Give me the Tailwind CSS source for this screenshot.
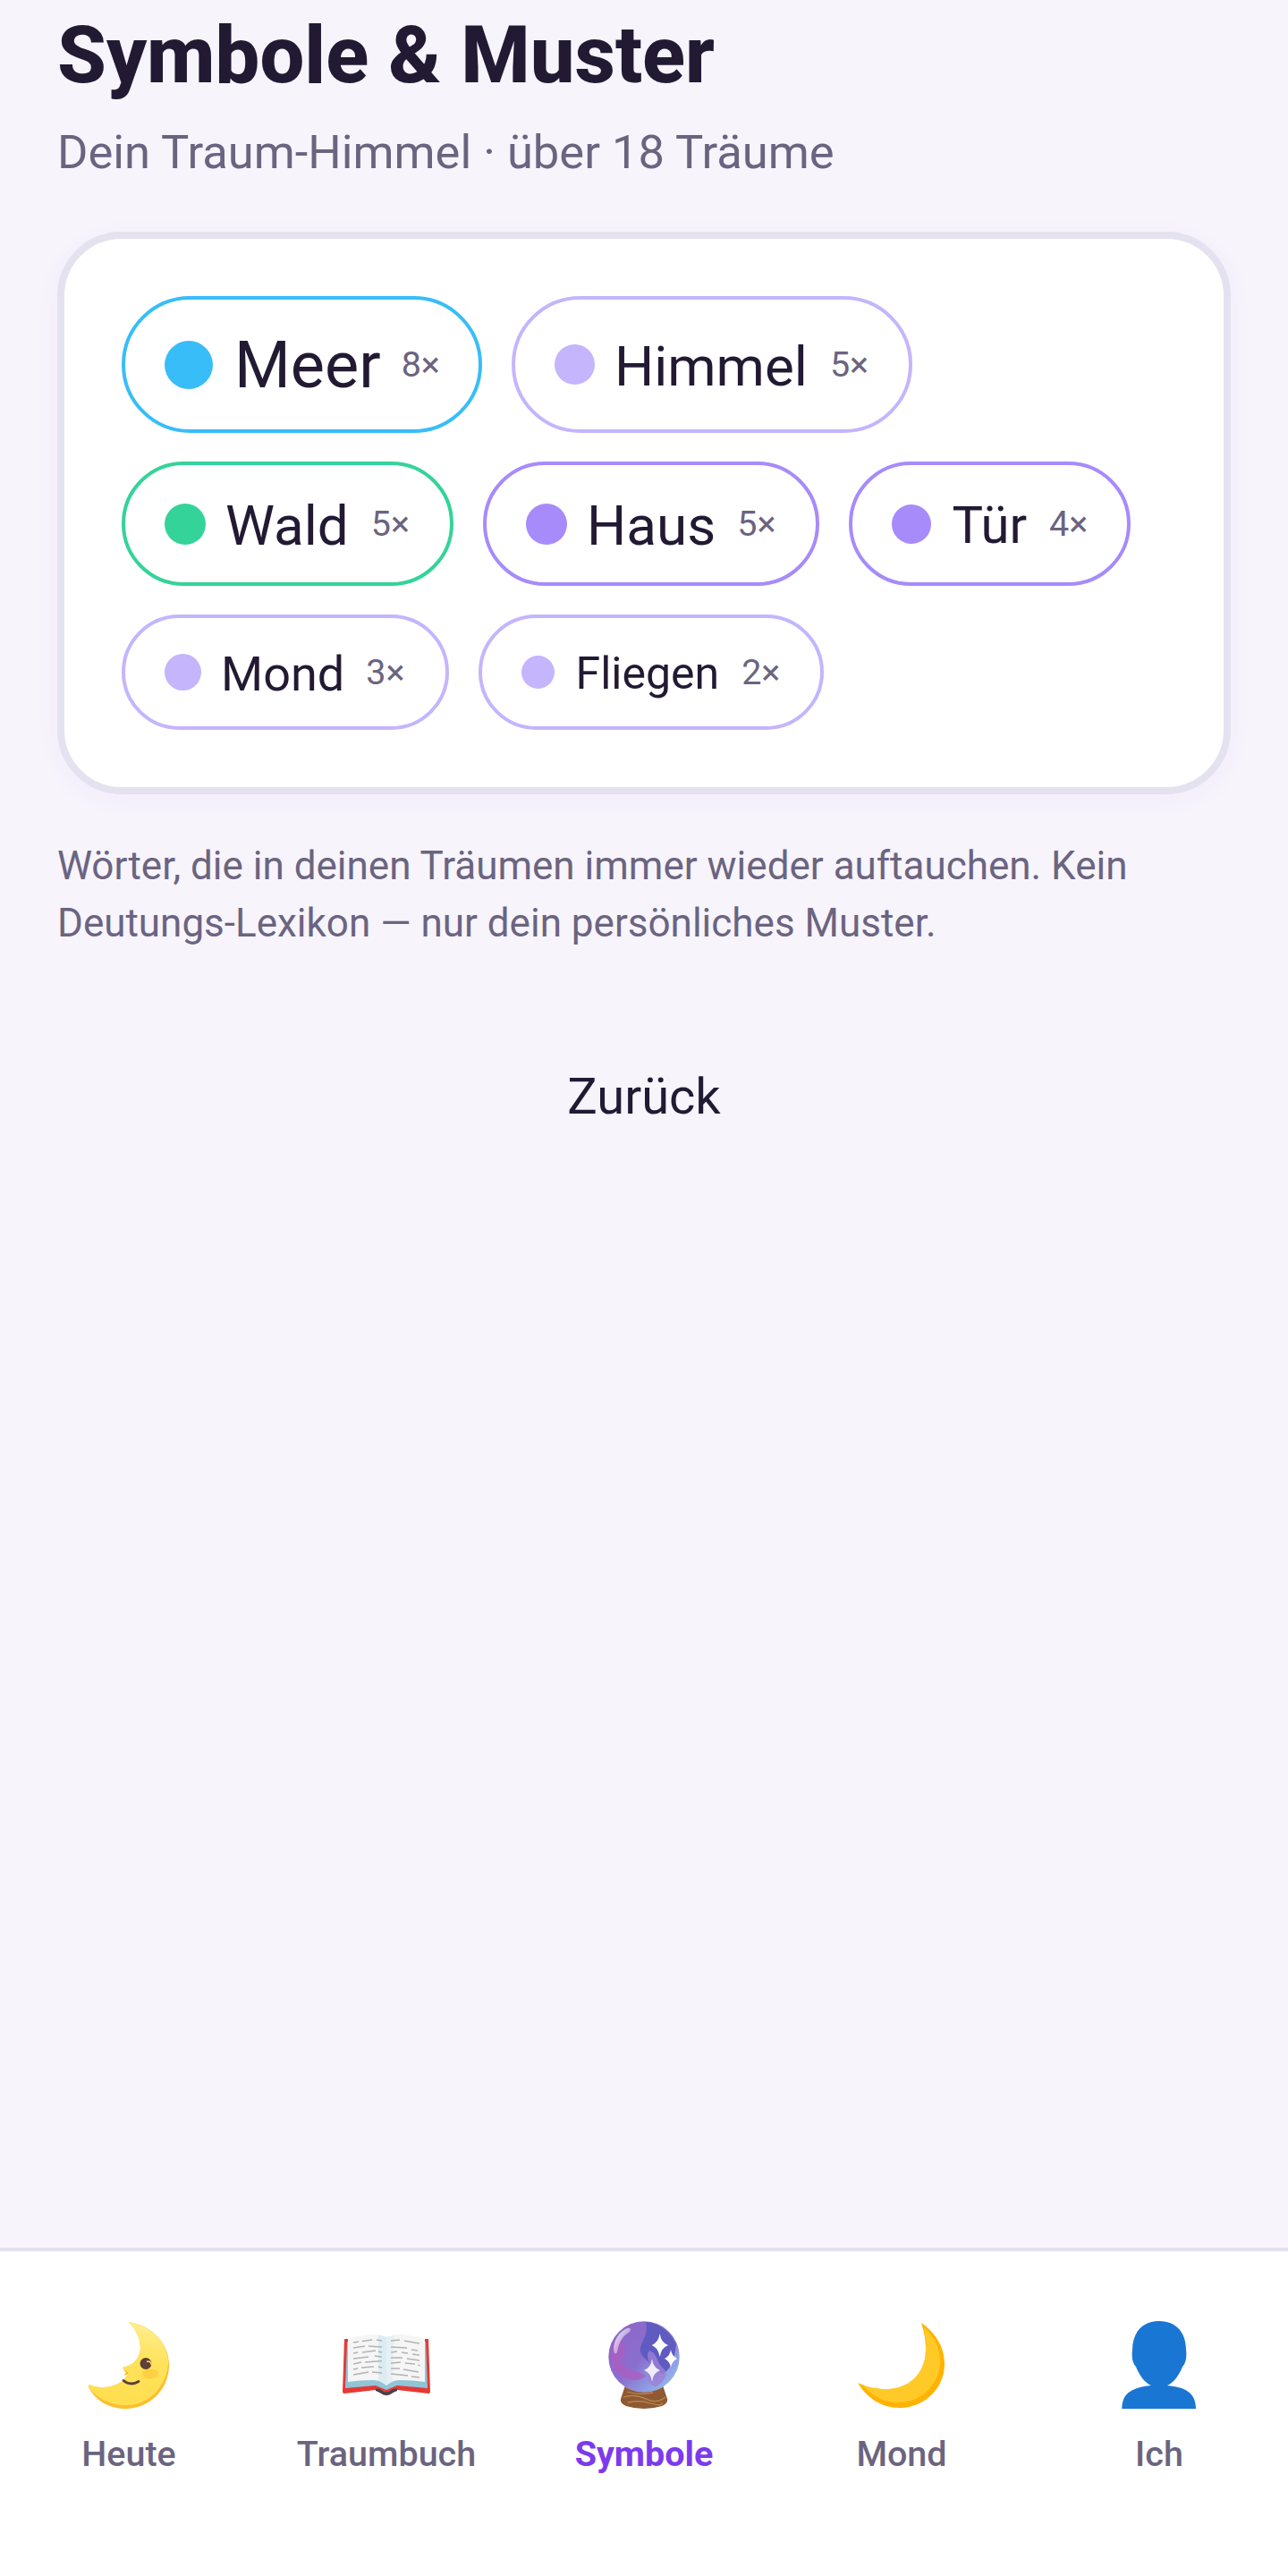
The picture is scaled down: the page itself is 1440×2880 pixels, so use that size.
<!DOCTYPE html>
<html lang="de">
<head>
  <meta charset="UTF-8" />
  <meta name="viewport" content="width=device-width, initial-scale=1.0"/>
  <title>Symbole & Muster</title>
  <script src="https://cdn.jsdelivr.net/npm/@tailwindcss/browser@4"></script>
</head>
<body class="bg-[#f7f4fc] text-[#221a33] font-[Roboto,sans-serif]">
  <div class="flex flex-col h-[2880px]">

    <main class="flex-1 px-[64px]">
      <h1 class="pt-[14px] text-[88.5px] leading-[96px] font-extrabold">Symbole &amp; Muster</h1>
      <p class="mt-[28px] text-[52.5px] leading-[64px] text-[#6b6480]">Dein Traum-Himmel · über 18 Träume</p>

      <!-- Symbol cloud -->
      <section class="mt-[57px] h-[629px] bg-white border-[8px] border-[#e5e2f0] rounded-[72px] p-[64px] shadow-[0_6px_30px_rgba(124,58,237,0.04)]">
        <div class="flex flex-wrap gap-x-[33px] gap-y-[32px]">
          <div class="flex items-center h-[153px] pl-[44px] pr-[43px] border-[4px] border-[#38bdf8] rounded-full">
            <span class="w-[54px] h-[54px] rounded-full bg-[#38bdf8]"></span>
            <span class="ml-[24px] pt-[3px] text-[72px]">Meer</span>
            <span class="ml-[23px] text-[39.5px] text-[#6b6480]">8×</span>
          </div>
          <div class="flex items-center h-[153px] pl-[44px] pr-[45px] border-[4px] border-[#c4b5fd] rounded-full">
            <span class="w-[45px] h-[45px] rounded-full bg-[#c4b5fd]"></span>
            <span class="ml-[22px] pt-[4px] text-[62px]">Himmel</span>
            <span class="ml-[25px] text-[39.5px] text-[#6b6480]">5×</span>
          </div>
          <div class="flex items-center h-[139px] pl-[44px] pr-[45px] border-[4px] border-[#34d399] rounded-full">
            <span class="w-[46px] h-[46px] rounded-full bg-[#34d399]"></span>
            <span class="ml-[22px] pt-[3px] text-[62px]">Wald</span>
            <span class="ml-[25px] text-[39.5px] text-[#6b6480]">5×</span>
          </div>
          <div class="flex items-center h-[139px] pl-[44px] pr-[45px] border-[4px] border-[#a78bfa] rounded-full">
            <span class="w-[46px] h-[46px] rounded-full bg-[#a78bfa]"></span>
            <span class="ml-[22px] pt-[3px] text-[62px]">Haus</span>
            <span class="ml-[24px] text-[39.5px] text-[#6b6480]">5×</span>
          </div>
          <div class="flex items-center h-[139px] pl-[44px] pr-[44px] border-[4px] border-[#a78bfa] rounded-full">
            <span class="w-[44px] h-[44px] rounded-full bg-[#a78bfa]"></span>
            <span class="ml-[23px] pt-[3px] text-[58px]">Tür</span>
            <span class="ml-[25px] text-[39.5px] text-[#6b6480]">4×</span>
          </div>
          <div class="flex items-center h-[129px] pl-[44px] pr-[45px] border-[4px] border-[#c4b5fd] rounded-full">
            <span class="w-[41px] h-[41px] rounded-full bg-[#c4b5fd]"></span>
            <span class="ml-[22px] pt-[3px] text-[54px]">Mond</span>
            <span class="ml-[24px] text-[39.5px] text-[#6b6480]">3×</span>
          </div>
          <div class="flex items-center h-[129px] pl-[44px] pr-[45px] border-[4px] border-[#c4b5fd] rounded-full">
            <span class="w-[37px] h-[37px] rounded-full bg-[#c4b5fd]"></span>
            <span class="ml-[24px] pt-[3px] text-[50px]">Fliegen</span>
            <span class="ml-[25px] text-[39.5px] text-[#6b6480]">2×</span>
          </div>
        </div>
      </section>

      <p class="mt-[48px] text-[44px] leading-[64px] text-[#6b6480]">Wörter, die in deinen Träumen immer wieder auftauchen. Kein<br>Deutungs-Lexikon — nur dein persönliches Muster.</p>

      <button class="block w-full mt-[120px] h-[80px] text-[56px] text-center">Zurück</button>
    </main>

    <!-- Bottom navigation -->
    <nav class="h-[367px] grid grid-cols-5 bg-white border-t-[4px] border-[#e5e2f0] pt-[77px]">
      <a class="flex flex-col items-center">
        <svg class="w-[100px] h-[100px]" viewBox="0 0 100 100">
          <defs>
            <linearGradient id="faceMoon" x1="0.7" y1="0" x2="0.5" y2="1">
              <stop offset="0" stop-color="#ffee90"/>
              <stop offset="0.45" stop-color="#ffe25a"/>
              <stop offset="1" stop-color="#ffde50"/>
            </linearGradient>
          </defs>
          <path fill="#fbc02d" d="M50 2C76 6 95 26 95 50C95 78 73 99 46 99C28 99 13 90 5 75C4 73 6 72 8 73C20 77 32 75 42 69L50 60L43 53C54 51 62 44 63 32C63 20 58 11 50 2Z"/>
          <path fill="url(#faceMoon)" d="M50 2C75 6 95 26 94 49C92 74 72 96 46 95C30 95 15 88 5 75C4 73 6 72 8 73C20 77 32 75 42 69L50 60L43 53C54 51 62 44 63 32C63 20 58 11 50 2Z"/>
          <path fill="#ffb300" d="M43 53L50 60L44 62L47 59Z"/>
          <ellipse cx="74" cy="60" rx="9" ry="5.5" fill="#fdc93a" opacity="0.7"/>
          <circle cx="69" cy="48.5" r="6.5" fill="#5d4037"/>
          <path d="M70 46.5Q74 44.5 75.5 50" stroke="#ffe25a" stroke-width="1.6" fill="none"/>
          <path d="M44 67.5Q52 74 61 68.5" stroke="#5d4037" stroke-width="2.8" fill="none" stroke-linecap="round"/>
        </svg>
        <span class="mt-[26px] text-[39.5px] leading-[48px] font-medium text-[#6b6480]">Heute</span>
      </a>
      <a class="flex flex-col items-center">
        <svg class="w-[100px] h-[100px]" viewBox="0 0 100 100">
          <path fill="#e53935" d="M3 21L1 80Q1 82 3 82L38 78L44 82Q50 86 56 82L62 78L97 82Q99 82 99 80L97 21Z"/>
          <path fill="#90c4d6" d="M6 24L4 76L38 73L50 78L62 73L96 76L94 24Z"/>
          <path fill="#37474f" d="M38 76.5L43 77Q50 84 57 77L62 76.5L62 79L57 81Q50 87 43 81L38 79Z"/>
          <path fill="#f5f5f5" d="M7 21Q24 16 41 16L50 19L50 73Q42 66 34 67Q20 67 7 69Z"/>
          <path fill="#f5f5f5" d="M93 21Q76 16 59 16L50 19L50 73Q58 66 66 67Q80 67 93 69Z"/>
          <path fill="#dcecf2" d="M41 16L50 19L50 73Q46 69 41 67.500Z"/>
          <path fill="#e6f0f4" d="M59 17L50 19L50 73Q53 70 57 68Z"/>
          <g stroke="#b3b3b3" stroke-width="1.3" fill="none">
            <path d="M13 25L19 24M23 23.500L34 22M39 22L45 23M13 31L26 29M30 29L45 30M13 37L18 36M23 36L38 34M41 35L45 36M13 43L30 41M37 40L45 41M13 49L22 47M26 47L45 45.500M13 55L18 54M22 53L36 52M41 52L45 53M13 61L30 58M34 58L45 59"/>
            <path d="M55 23L65 22M70 23L87 26M55 30L73 31M78 33L85 34M55 36L62 35M67 36L74 37M79 38L87 39M55 42L68 42M73 43L87 45M55 48L66 47M71 48L82 49M85 50L88 51M55 54L65 54M69 55L86 58M55 60L74 62M78 63L87 64"/>
          </g>
        </svg>
        <span class="mt-[26px] text-[39.5px] leading-[48px] font-medium text-[#6b6480]">Traumbuch</span>
      </a>
      <a class="flex flex-col items-center">
        <svg class="w-[100px] h-[100px]" viewBox="0 0 100 100">
          <defs>
            <linearGradient id="orb" x1="0.1" y1="0.1" x2="0.9" y2="0.9">
              <stop offset="0" stop-color="#8e66c9"/>
              <stop offset="0.5" stop-color="#8a6fce"/>
              <stop offset="1" stop-color="#92bbee"/>
            </linearGradient>
            <linearGradient id="shine" x1="0" y1="0" x2="1" y2="1">
              <stop offset="0" stop-color="#ffffff" stop-opacity="0.85"/>
              <stop offset="1" stop-color="#ffffff" stop-opacity="0.1"/>
            </linearGradient>
          </defs>
          <path fill="#8d5a33" d="M29 73L71 73L76 88Q77 93 70 96Q50 102 30 96Q23 93 24 88Z"/>
          <path stroke="#c08552" stroke-width="1.300" fill="none" d="M27 86Q40 82 52 88T74 86M32 92Q45 89 58 93T70 92M31 80Q44 84 60 81"/>
          <ellipse cx="50" cy="74" rx="21" ry="4.500" fill="#f4a76a"/>
          <circle cx="50" cy="41" r="39.700" fill="url(#orb)"/>
          <path fill="#5f5bc0" d="M52 2C68 3 80 14 86 27C84 44 80 56 70 60C60 50 50 44 46 36C44 26 56 18 52 2Z"/>
          <path fill="#ad5cc0" opacity="0.75" d="M21 20C32 28 30 38 24 46C30 58 44 56 52 62C42 72 24 66 15 52C10 42 13 30 21 20Z"/>
          <path fill="#9d7fd6" opacity="0.8" d="M56 34C66 38 64 48 72 54C78 60 72 70 64 74C56 74 52 64 56 56C60 48 50 42 56 34Z"/>
          <path fill="url(#shine)" d="M31 9Q37 8 34 13C26 18 22 24 20 36Q17 40 16 33C16 22 22 13 31 9Z"/>
          <path fill="#ffffff" d="M67.700 15Q69 25 77 28Q69 31 67.700 41Q66 31 58.700 28Q66 25 67.700 15Z"/>
          <path fill="#ffffff" d="M80 33Q81 40 87 43Q81 46 80 53Q79 46 73 43Q79 40 80 33Z"/>
          <path fill="#ffffff" opacity="0.85" d="M59 43Q60 53 68 56Q60 59 59 69Q58 59 50 56Q58 53 59 43Z"/>
        </svg>
        <span class="mt-[26px] text-[39.5px] leading-[48px] font-bold text-[#7c3aed]">Symbole</span>
      </a>
      <a class="flex flex-col items-center">
        <svg class="w-[100px] h-[100px]" viewBox="0 0 100 100">
          <path fill="#ffb300" d="M72 3C88 14 98 30 98 49C98 76 76 98 47 98C28 98 11 87 1 70C12 75 22 77 32 77C58 77 77 60 77 33C77 22 75 12 72 3Z"/>
          <path fill="#ffca28" d="M75 8C87 19 94 33 93 49C91 73 71 92 47 92C31 92 17 85 7 73C15 76 24 77.500 32 77C58 77 77 60 77 33C77 24 76 15 75 8Z"/>
        </svg>
        <span class="mt-[26px] text-[39.5px] leading-[48px] font-medium text-[#6b6480]">Mond</span>
      </a>
      <a class="flex flex-col items-center">
        <svg class="w-[100px] h-[100px]" viewBox="0 0 100 100">
          <path fill="#1976d2" d="M50 1C70 1 80 15 80 33C81 41 80 48 76 52C72 62 66 70 59 73C78 75 91 80 91 99L8.300 99C8.300 80 22 75 41 73C34 70 28 62 24 52C20 48 19 41 20 33C20 15 30 1 50 1Z"/>
        </svg>
        <span class="mt-[26px] text-[39.5px] leading-[48px] font-medium text-[#6b6480]">Ich</span>
      </a>
    </nav>
  </div>
</body>
</html>
